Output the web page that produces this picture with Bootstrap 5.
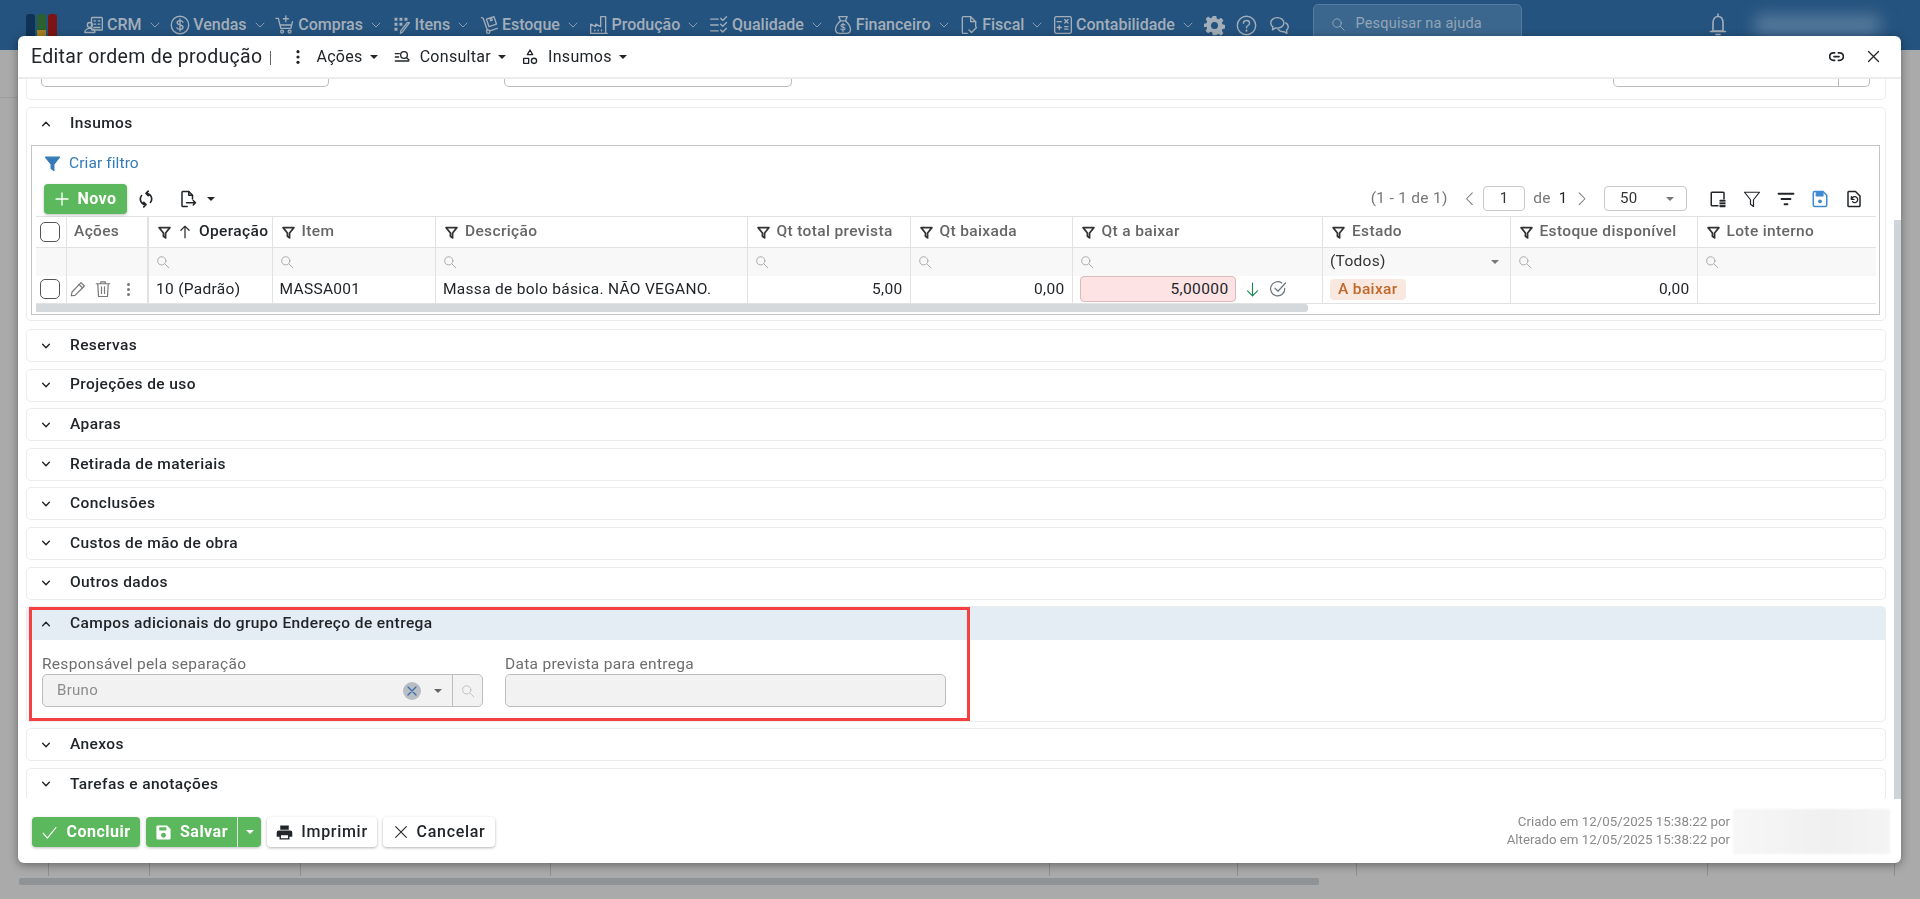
<!DOCTYPE html>
<html lang="pt-BR">
<head>
<meta charset="utf-8">
<title>Editar ordem de produção</title>
<link href="https://cdn.jsdelivr.net/npm/bootstrap@5.3.0/dist/css/bootstrap.min.css" rel="stylesheet">
<style>
html,body{height:100%;overflow:hidden}
body{background:#aaa;font-family:Roboto,"Liberation Sans",sans-serif;font-size:15px;color:#212529;letter-spacing:.3px}
svg.ic{width:1em;height:1em;fill:none;stroke:currentColor;stroke-width:1.6;stroke-linecap:round;stroke-linejoin:round;flex:none;display:block}
.topbar{height:50px;background:#24537f;color:#a3aeb9;font-weight:500;font-size:16px;letter-spacing:0;padding-left:26px}
.logo-mark{width:31px;height:36px;margin-top:14px;align-self:flex-start;display:grid;grid-template-columns:repeat(3,9px);gap:2px;}
.logo-mark i{display:block;border-radius:3px 3px 0 0;height:36px}
.logo-a{background:#0f3357}.logo-b{background:#2c6030;position:relative}.logo-c{background:#7d1414}
.logo-b::after{content:"";position:absolute;left:0;right:0;top:16px;height:20px;background:#a67f1e}
.menu-row{margin-left:27px;gap:9.7px;height:32px}
.menu-item{gap:3px}
.menu-item svg.ic{font-size:20px}
.menu-item svg.chev{font-size:12px;margin-left:4px}
.tool-ic{font-size:21px}
.tool-wide{margin-left:2px}
.help-box{width:209px;height:46px;margin-left:23px;margin-top:4px;align-self:flex-start;background:#3b678f;border:1px solid #557b9f;border-radius:5px;color:#94a5b5;font-weight:400;font-size:14.5px;padding:0 17px 6px;letter-spacing:.2px;gap:10px}
.bell-ic{font-size:24px;margin-left:184px}
.user-blur{width:125px;height:20px;margin-left:25px;background:#587b9c;filter:blur(8px)}
.under-area{height:813px;padding-top:47px}
.under-line{height:1px;width:1000px;background:#9e9e9e}
.under-cols{height:13px;width:1895px}
.under-cols i{display:block;height:13px;border-right:1px solid #8f8f8f}
.under-bar{height:7px;width:1300px;margin:2px 0 0 19px;background:#8f9396;border-radius:2px}

.edit-window{position:fixed;left:18px;top:36px;width:1883px;height:827px;background:#fff;border-radius:6px;box-shadow:0 2px 10px rgba(0,0,0,.4);display:flex;flex-direction:column;overflow:hidden}
.win-head{height:43px;flex:none;border-bottom:2px solid #ececec;padding:0 20px 0 13px;font-size:16px}
.win-title{font-size:19.5px;letter-spacing:.3px;font-weight:400;color:#212529;margin:0;line-height:1}
.head-sep{width:1px;height:14px;background:#666;margin:2px 0 0 8px}
.head-menu{gap:16px;margin-left:19px}
.head-menu svg.ic{font-size:16px}
.head-link{gap:10px}
.head-link .tri{margin-left:-3px}
.tri{display:inline-block;width:0;height:0;border-left:4px solid transparent;border-right:4px solid transparent;border-top:4.5px solid currentColor}
.head-end{gap:22px;font-size:15px}
.head-end svg.ic{stroke-width:2}
.win-body{flex:1;min-height:0;padding:0 14px 0 8px;position:relative;overflow:hidden}
.scroll-thumb{position:absolute;right:0;top:141px;width:7px;height:593px;background:#ced4da;z-index:2}
.sec-card{border:1px solid #ececec;border-radius:5px;margin-bottom:6.6px;background:#fff;width:1860px}
.sec-head{height:31px;padding-left:14px;font-weight:500;font-size:15.5px;letter-spacing:.4px;gap:19px}
.sec-head svg.ic{font-size:10px;stroke-width:3.5;flex:none}
.stub-card{height:21px;border-top:0;border-radius:0 0 5px 5px;position:relative;margin-bottom:7px}
.stub-box{position:absolute;top:0;height:8px;border:1px solid #bbb;border-top:0;border-radius:0 0 5px 5px}
.stub-box.s1{left:14px;width:288px}.stub-box.s2{left:477px;width:288px}.stub-box.s3{left:1586px;width:257px}
.stub-box.s3::after{content:"";position:absolute;right:30px;top:0;bottom:0;border-right:1px solid #bbb}
.ins-card{height:214px;margin-bottom:8px}
.grid-box{margin:6px 0 0 4px;height:170px;width:1849px;border:1px solid #c4c4c4;padding:0 4px;overflow:hidden}
.filter-link{height:35px;padding-left:8px;gap:8px;color:#337ab7;font-size:15.5px;letter-spacing:.1px}
.filter-link svg{font-size:17px;fill:#337ab7;stroke:#337ab7}
.grid-bar{height:35px;padding:0 12px 0 8px}
.btn-go{background:#5cb85c;border:0;color:#fff;font-weight:700;font-size:16px;border-radius:4px;box-shadow:0 1px 3px rgba(0,0,0,.25);letter-spacing:.5px;padding:0;display:flex;align-items:center;height:30px}
.btn-go:hover{background:#5cb85c;color:#fff}
.btn-plain{background:#fff;border:0;color:#212529;font-weight:500;font-size:16px;border-radius:4px;box-shadow:0 1px 3px rgba(0,0,0,.3);letter-spacing:.7px;padding:0;display:flex;align-items:center;height:30px}
.new-btn{width:83px;gap:7px;justify-content:center}
.new-btn svg{font-size:16px;stroke-width:2}
.bar-tool{font-size:18px;color:#212529}
.sync-gap{margin-left:10px}
.tri-gap{margin-left:10px}
.tool-gap{margin-left:16px}
.cols-gap{margin-left:22px}
.pg-gap-a{margin-left:14px}
.pg-gap-b{margin-left:6px}
.pg-gap-c{margin-left:15px}
.tool-blue{color:#3f8ad0}
.page-info{color:#777;font-size:15.5px}
.page-num{width:42px;height:25px;border:1px solid #c8c8c8;border-radius:4px;text-align:center;line-height:23px;color:#333}
.page-size{width:83px;height:25px;border:1px solid #c8c8c8;border-radius:4px;padding:0 12px 0 15px;color:#333;font-size:15px}
.page-size .tri{color:#777}
.grid-table{table-layout:fixed;width:1840px;margin:0;font-size:15.5px;border-collapse:collapse}
.grid-table th,.grid-table td{padding:0 7px;border:0;border-right:1px solid #e2e2e2;border-bottom:1px solid #e2e2e2;white-space:nowrap;overflow:hidden;vertical-align:middle;box-shadow:none}
.grid-table th{height:31px;font-weight:500;color:#666;border-top:1px solid #e2e2e2;letter-spacing:.35px}
.grid-table th.sorted{color:#212529}
.grid-table td{color:#212529;letter-spacing:.3px}
.grid-table tr.filter-row td{height:28px;background:#f8f8f8;color:#333;border-bottom:0}
.grid-table tr.data-row td{height:28px}
.grid-table td.thick,.grid-table th.thick{border-right-width:2px}
.grid-table th .cell-in{display:flex;align-items:center;gap:7px;padding-left:2px}
.grid-table th svg.ic{font-size:13px;stroke:#333;stroke-width:3.2}
.grid-table th svg.thin-arrow{font-size:14px;stroke-width:2.2}
.filter-row svg.ic{font-size:14px;color:#a8a8a8}
.filter-row .tri{color:#777}
.check-box{display:block;width:20px;height:20px;border:1.5px solid #555;border-radius:5px;background:#fff}
.act-set{gap:7px;color:#777;font-size:18px;margin-left:-5px}
.act-set svg:last-child{font-size:15px;margin-left:2px}
.amount-in{height:26px;background:#fde3e3;border:1px solid #d9b9b9;border-radius:4px;width:156px;text-align:right;padding:0 6px;line-height:24px;letter-spacing:.4px}
.amt-cell{gap:8px}
.amt-cell svg.ic{font-size:17px}
.amt-cell svg.big-ok{font-size:18px}
.status-pill{background:#f8e8df;color:#c0682a;font-weight:500;font-size:15.5px;border-radius:4px;padding:0 8px;height:21px;line-height:21px;display:inline-block;letter-spacing:.35px}
.scroll-row{height:8px;background:#fff}
.scroll-row i{display:block;width:1272px;height:8px;background:#d5d9dc;border-radius:0 3px 3px 0}
.extra-card{height:116px;margin-bottom:6px}
.extra-head{background:#e3edf3;height:33px}
.extra-body{padding:15px 15px 0;gap:22px;position:relative}
.ext-field{width:441px}
.ext-label{color:#6d6d6d;font-size:15.5px;line-height:18px;height:19px;letter-spacing:.3px}
.ext-input{height:33px;background:#f2f2f2;border:1px solid #bdbdbd;border-radius:5px;color:#8c8c8c;padding-left:14px;font-size:15px}
.clear-dot{width:18px;height:18px;border-radius:50%;background:#b9bec4;color:#3b6ea8;font-size:12px;margin-left:auto}
.clear-dot svg.ic{stroke-width:2.6}
.ext-caret{margin:0 10px 0 13px;color:#666}
.ext-search{width:30px;height:100%;border-left:1px solid #bdbdbd;font-size:14px;color:#c0c0c0}
.mark-box{position:absolute;left:2px;top:-33px;width:941px;height:114px;border:3px solid #f44040;pointer-events:none}
.win-foot{height:64px;flex:none;padding:0 11px 0 14px}
.foot-btns{gap:6px;height:30px;align-self:flex-start;margin-top:18px}
.foot-ic{font-size:17px}
.foot-note{color:#8a8a8a;font-size:13.3px;line-height:18px;text-align:right;letter-spacing:0;margin-right:3px}
.user-smudge{width:157px;height:45px;background:linear-gradient(90deg,#f7f7f7,#f0f0f0 60%,#f4f4f4);filter:blur(1px)}
.save-group{display:flex;border-radius:4px;box-shadow:0 1px 3px rgba(0,0,0,.25)}
.save-group .btn-go{box-shadow:none}
</style>
</head>
<body>
<svg width="0" height="0" class="position-absolute">
<defs>
<symbol id="i-chev" viewBox="0 0 24 24"><path d="M4 8l8 8 8-8"/></symbol>
<symbol id="i-up" viewBox="0 0 24 24"><path d="M4 16l8-8 8 8"/></symbol>
<symbol id="i-arrowup" viewBox="0 0 24 24"><path d="M12 22V2M5 9l7-7 7 7"/></symbol>
<symbol id="i-crm" viewBox="0 0 24 24"><rect x="9" y="3" width="13" height="15" rx="1"/><path d="M12 7h2M17 7h2M12 11h2M17 11h2M12 15h7"/><circle cx="7" cy="12" r="3"/><path d="M1 21c0-3 3-5 6-5s5 1 6 3v2z"/></symbol>
<symbol id="i-usd" viewBox="0 0 24 24"><circle cx="12" cy="12" r="10.5"/><path d="M15.5 8.5c-.8-1.2-2-1.7-3.5-1.7-2 0-3.4 1-3.4 2.6 0 3.6 7 1.6 7 5.2 0 1.700-1.600 2.700-3.600 2.700-1.600 0-2.900-.6-3.700-1.800M12 4.800v14.400"/></symbol>
<symbol id="i-cart" viewBox="0 0 24 24"><path d="M1 4h3l3 12h12l2-8M7 12h13"/><path d="M13 1v7M10 4.500h6"/><circle cx="8.500" cy="20" r="1.700"/><circle cx="17.500" cy="20" r="1.700"/></symbol>
<symbol id="i-items" viewBox="0 0 24 24"><g stroke-linecap="butt" stroke-dasharray="3.500 2.500" stroke-width="3.500"><path d="M3 5h18M3 11h12M3 17h6"/></g><path d="M21 9l-9 12-2 1 .5-3 8-10z" stroke-width="1.500"/></symbol>
<symbol id="i-truck" viewBox="0 0 24 24"><path d="M3 3l2 1 5 14"/><circle cx="11" cy="20" r="2"/><path d="M13 19l9-3"/><path d="M9 5l9-3 3 9-9 3z"/><path d="M13 4l1 3 2-1-1-2"/></symbol>
<symbol id="i-factory" viewBox="0 0 24 24"><path d="M2 22V11l6 3v-3l6 3V2h6v20zM2 22h20"/><path d="M7 18v1M11 18v1M15 18v1"/></symbol>
<symbol id="i-checks" viewBox="0 0 24 24"><path d="M2 5h9M2 12h9M2 19h9M14 4l2.500 2.500L21 2M14 11l2.500 2.500L21 9M14 18l2.500 2.500L21 16"/></symbol>
<symbol id="i-bag" viewBox="0 0 24 24"><path d="M9 7L7 2h10l-2 5"/><path d="M9 7h6M9 7c-3 3-6 6-6 10 0 3 2 5 5 5h8c3 0 5-2 5-5 0-4-3-7-6-10"/><path d="M14.500 12c-.500-.800-1.500-1-2.500-1-1.400 0-2.500.6-2.500 1.800 0 2.400 5 1.200 5 3.400 0 1.100-1 1.800-2.500 1.800-1.200 0-2.100-.4-2.600-1.200M12 9.500v10.500" stroke-width="1.300"/></symbol>
<symbol id="i-doc" viewBox="0 0 24 24"><path d="M10 22H5a1 1 0 0 1-1-1V3a1 1 0 0 1 1-1h9l6 6v6"/><path d="M14 2v6h6"/><path d="M12 18l3 3 6-6"/></symbol>
<symbol id="i-calc" viewBox="0 0 24 24"><rect x="2" y="2" width="20" height="20" rx="2"/><path d="M5 8h5M14 5.500l4 4M18 5.500l-4 4M5 15h5M7.500 12.500v5M14 14h4M14 17h4"/></symbol>
<symbol id="i-gear" viewBox="0 0 24 24"><path fill="currentColor" stroke="none" fill-rule="evenodd" d="M10 1h4l.7 3.200 1.900.8 2.800-1.800 2.800 2.800-1.800 2.800.8 1.900 3.200.7v4l-3.200.7-.8 1.900 1.800 2.800-2.800 2.800-2.800-1.800-1.900.8L14 23h-4l-.7-3.200-1.900-.8-2.800 1.800-2.800-2.800 1.800-2.800-.8-1.900L-.4 14v-4l3.200-.7.800-1.900L1.800 4.600l2.800-2.800 2.800 1.800 1.900-.8zM12 8a4 4 0 1 0 0 8 4 4 0 0 0 0-8z"/></symbol>
<symbol id="i-help" viewBox="0 0 24 24"><circle cx="12" cy="12" r="10.500"/><path d="M8.500 9.500c0-2 1.500-3.300 3.500-3.300s3.500 1.300 3.500 3.100c0 2.700-3.500 2.700-3.500 5.200"/><path d="M12 17.600v.4" stroke-width="2.200"/></symbol>
<symbol id="i-chat" viewBox="0 0 24 24"><path d="M9.500 3c-4 0-7.500 2.400-7.500 6 0 2 1 3.500 2.500 4.500L4 17l3.500-2.200c.7.100 1.300.2 2 .2 4 0 7.500-2.400 7.500-6s-3.500-6-7.500-6z"/><path d="M19 9c2 1 3 2.700 3 4.500 0 1.700-.8 3-2 4l.5 3.500-3.500-2c-2.500.3-5-.5-6.500-2.500"/></symbol>
<symbol id="i-search" viewBox="0 0 24 24"><circle cx="10" cy="10" r="7"/><path d="M15.500 15.500L22 22"/></symbol>
<symbol id="i-bell" viewBox="0 0 24 24"><path d="M12 1v2M7 10c0-4 2-6.500 5-6.500s5 2.500 5 6.500v8H7zM4.500 18.500h15M10 21.500h4"/></symbol>
<symbol id="i-dots" viewBox="0 0 24 24"><circle cx="12" cy="4" r="2.400" fill="currentColor" stroke="none"/><circle cx="12" cy="12" r="2.400" fill="currentColor" stroke="none"/><circle cx="12" cy="20" r="2.400" fill="currentColor" stroke="none"/></symbol>
<symbol id="i-qlist" viewBox="0 0 24 24"><path d="M2 7h6M2 12h5M2 18h20" stroke-width="2"/><circle cx="15" cy="9" r="5" stroke-width="2"/><path d="M19 13l3.500 3.500" stroke-width="2"/></symbol>
<symbol id="i-shapes" viewBox="0 0 24 24"><path d="M12 1.500l4 7H8z" stroke-width="2"/><rect x="2.500" y="14" width="7.500" height="7.500" stroke-width="2"/><circle cx="18" cy="17.800" r="3.900" stroke-width="2"/></symbol>
<symbol id="i-link" viewBox="0 0 24 24"><path d="M9 6H7a6 6 0 0 0 0 12h2M15 6h2a6 6 0 0 1 0 12h-2M8 12h8" stroke-width="2.800"/></symbol>
<symbol id="i-x" viewBox="0 0 24 24"><path d="M4 4l16 16M20 4L4 20"/></symbol>
<symbol id="i-funnel" viewBox="0 0 24 24"><path d="M2 3h20l-8 10v9l-4-3v-6z"/></symbol>
<symbol id="i-plus" viewBox="0 0 24 24"><path d="M12 3v18M3 12h18"/></symbol>
<symbol id="i-sync" viewBox="0 0 24 24"><path d="M12 4.500a7.500 7.500 0 0 1 6 12M15 1.500l-3 3 3 3M12 19.500a7.500 7.500 0 0 1-6-12M9 22.500l3-3-3-3" stroke-width="2.200"/></symbol>
<symbol id="i-export" viewBox="0 0 24 24"><path d="M11 22H5a1 1 0 0 1-1-1V3a1 1 0 0 1 1-1h8l5 5v5" stroke-width="2"/><path d="M13 2v5h5M10 17h12M19 14l3 3-3 3" stroke-width="2"/></symbol>
<symbol id="i-left" viewBox="0 0 24 24"><path d="M16 3l-9 9 9 9"/></symbol>
<symbol id="i-right" viewBox="0 0 24 24"><path d="M8 3l9 9-9 9"/></symbol>
<symbol id="i-cols" viewBox="0 0 24 24"><path d="M12 21H4a1 1 0 0 1-1-1V4a1 1 0 0 1 1-1h15a1 1 0 0 1 1 1v8" stroke-width="2"/><rect x="14" y="13" width="8" height="10" rx="1" fill="currentColor" stroke="none"/><path d="M14 16h8M14 19.500h8" stroke="#fff" stroke-width="1"/></symbol>
<symbol id="i-sort" viewBox="0 0 24 24"><path d="M2 5h20M6 12h12M10 19h4" stroke-width="2.400"/></symbol>
<symbol id="i-save" viewBox="0 0 24 24"><path d="M5 2h11l5 5v13a2 2 0 0 1-2 2H5a2 2 0 0 1-2-2V4a2 2 0 0 1 2-2z" stroke-width="2"/><path d="M7 2.500h9V8H7z" fill="currentColor"/><circle cx="12" cy="15" r="2.500" fill="currentColor" stroke="none"/></symbol>
<symbol id="i-restore" viewBox="0 0 24 24"><path d="M5 2h9l6 6v13a1 1 0 0 1-1 1H5a1 1 0 0 1-1-1V3a1 1 0 0 1 1-1z" stroke-width="2"/><path d="M9 12a4 4 0 1 1 1 3.500M8.500 9v3.500H12" stroke-width="1.800"/></symbol>
<symbol id="i-pencil" viewBox="0 0 24 24"><path d="M4 16L16 3.500l4.500 4.500L8 20.500 3 21z"/><path d="M13.500 6l4.500 4.500"/></symbol>
<symbol id="i-trash" viewBox="0 0 24 24"><path d="M3 5h18M9 5V2.500h6V5M5 5l1 17h12l1-17M10 9v9M14 9v9"/></symbol>
<symbol id="i-down" viewBox="0 0 24 24"><path d="M12 3v18M5 14l7 7 7-7"/></symbol>
<symbol id="i-okc" viewBox="0 0 24 24"><path d="M21 11a9.500 9.500 0 1 1-4-7"/><path d="M8 11l4 4L22 4"/></symbol>
<symbol id="i-check" viewBox="0 0 24 24"><path d="M3 13l6 7L21 5"/></symbol>
<symbol id="i-floppy" viewBox="0 0 24 24"><path fill="currentColor" stroke="none" fill-rule="evenodd" d="M4 2h13l5 5v13a2 2 0 0 1-2 2H4a2 2 0 0 1-2-2V4a2 2 0 0 1 2-2zm2 2.500V9h10V4.500zM12 12.500a3.500 3.500 0 1 0 0 7 3.500 3.500 0 0 0 0-7z"/></symbol>
<symbol id="i-print" viewBox="0 0 24 24"><path fill="currentColor" stroke="none" fill-rule="evenodd" d="M6 2h12v6H6zM4 9h16a3 3 0 0 1 3 3v6h-4v4H5v-4H1v-6a3 3 0 0 1 3-3zm3 7v4h10v-4z"/></symbol>
</defs>
</svg>

<header class="topbar d-flex align-items-center">
  <div class="logo-mark" aria-hidden="true"><i class="logo-a"></i><i class="logo-b"></i><i class="logo-c"></i></div>
  <nav class="menu-row d-flex align-items-center">
    <a class="menu-item d-flex align-items-center text-reset text-decoration-none"><svg class="ic"><use href="#i-crm"/></svg>CRM<svg class="ic chev"><use href="#i-chev"/></svg></a>
    <a class="menu-item d-flex align-items-center text-reset text-decoration-none"><svg class="ic"><use href="#i-usd"/></svg>Vendas<svg class="ic chev"><use href="#i-chev"/></svg></a>
    <a class="menu-item d-flex align-items-center text-reset text-decoration-none"><svg class="ic"><use href="#i-cart"/></svg>Compras<svg class="ic chev"><use href="#i-chev"/></svg></a>
    <a class="menu-item d-flex align-items-center text-reset text-decoration-none"><svg class="ic"><use href="#i-items"/></svg>Itens<svg class="ic chev"><use href="#i-chev"/></svg></a>
    <a class="menu-item d-flex align-items-center text-reset text-decoration-none"><svg class="ic"><use href="#i-truck"/></svg>Estoque<svg class="ic chev"><use href="#i-chev"/></svg></a>
    <a class="menu-item d-flex align-items-center text-reset text-decoration-none"><svg class="ic"><use href="#i-factory"/></svg>Produção<svg class="ic chev"><use href="#i-chev"/></svg></a>
    <a class="menu-item d-flex align-items-center text-reset text-decoration-none"><svg class="ic"><use href="#i-checks"/></svg>Qualidade<svg class="ic chev"><use href="#i-chev"/></svg></a>
    <a class="menu-item d-flex align-items-center text-reset text-decoration-none"><svg class="ic"><use href="#i-bag"/></svg>Financeiro<svg class="ic chev"><use href="#i-chev"/></svg></a>
    <a class="menu-item d-flex align-items-center text-reset text-decoration-none"><svg class="ic"><use href="#i-doc"/></svg>Fiscal<svg class="ic chev"><use href="#i-chev"/></svg></a>
    <a class="menu-item d-flex align-items-center text-reset text-decoration-none"><svg class="ic"><use href="#i-calc"/></svg>Contabilidade<svg class="ic chev"><use href="#i-chev"/></svg></a>
    <svg class="ic tool-ic"><use href="#i-gear"/></svg>
    <svg class="ic tool-ic tool-wide"><use href="#i-help"/></svg>
    <svg class="ic tool-ic tool-wide"><use href="#i-chat"/></svg>
  </nav>
  <div class="help-box d-flex align-items-center"><svg class="ic"><use href="#i-search"/></svg>Pesquisar na ajuda</div>
  <svg class="ic bell-ic"><use href="#i-bell"/></svg>
  <div class="user-blur"></div>
</header>

<div class="under-area"><div class="under-line"></div></div>
<div class="under-cols d-flex">
  <i style="width:49px"></i><i style="width:101px"></i><i style="width:151px"></i><i style="width:250px"></i><i style="width:499px"></i><i style="width:188px"></i><i style="width:119px"></i><i style="width:351px"></i><i style="width:187px"></i>
</div>
<div class="under-bar"></div>

<section class="edit-window" role="dialog" aria-label="Editar ordem de produção">
  <div class="win-head d-flex align-items-center">
    <h1 class="win-title">Editar ordem de produção</h1>
    <span class="head-sep"></span>
    <div class="head-menu d-flex align-items-center">
      <a class="head-link d-flex align-items-center text-reset text-decoration-none"><svg class="ic"><use href="#i-dots"/></svg>Ações<span class="tri"></span></a>
      <a class="head-link d-flex align-items-center text-reset text-decoration-none"><svg class="ic"><use href="#i-qlist"/></svg>Consultar<span class="tri"></span></a>
      <a class="head-link d-flex align-items-center text-reset text-decoration-none"><svg class="ic"><use href="#i-shapes"/></svg>Insumos<span class="tri"></span></a>
    </div>
    <div class="head-end d-flex align-items-center ms-auto">
      <svg class="ic"><use href="#i-link"/></svg>
      <svg class="ic"><use href="#i-x"/></svg>
    </div>
  </div>

  <div class="win-body">
    <div class="scroll-thumb"></div>
    <div class="sec-card stub-card"><span class="stub-box s1"></span><span class="stub-box s2"></span><span class="stub-box s3"></span></div>

    <div class="sec-card ins-card">
      <div class="sec-head d-flex align-items-center"><svg class="ic"><use href="#i-up"/></svg>Insumos</div>
      <div class="grid-box">
        <a class="filter-link d-flex align-items-center text-decoration-none"><svg class="ic"><use href="#i-funnel"/></svg>Criar filtro</a>
        <div class="grid-bar d-flex align-items-center">
          <button type="button" class="btn btn-go new-btn"><svg class="ic"><use href="#i-plus"/></svg>Novo</button>
          <svg class="ic bar-tool sync-gap"><use href="#i-sync"/></svg>
          <svg class="ic bar-tool ms-4"><use href="#i-export"/></svg>
          <span class="tri tri-gap"></span>
          <div class="d-flex align-items-center ms-auto">
            <span class="page-info">(1 - 1 de 1)</span>
            <svg class="ic page-info pg-gap-a"><use href="#i-left"/></svg>
            <span class="page-num pg-gap-b">1</span>
            <span class="page-info ms-2">de</span>
            <span class="ms-2">1</span>
            <svg class="ic page-info pg-gap-b"><use href="#i-right"/></svg>
            <span class="page-size d-flex align-items-center justify-content-between pg-gap-c">50<span class="tri"></span></span>
            <svg class="ic bar-tool cols-gap"><use href="#i-cols"/></svg>
            <svg class="ic bar-tool tool-gap"><use href="#i-funnel"/></svg>
            <svg class="ic bar-tool tool-gap"><use href="#i-sort"/></svg>
            <svg class="ic bar-tool tool-gap tool-blue"><use href="#i-save"/></svg>
            <svg class="ic bar-tool tool-gap"><use href="#i-restore"/></svg>
          </div>
        </div>
        <table class="table grid-table">
          <colgroup><col style="width:30.5px"><col style="width:81.5px"><col style="width:124px"><col style="width:163.5px"><col style="width:311.5px"><col style="width:163px"><col style="width:162px"><col style="width:250.5px"><col style="width:187.5px"><col style="width:187px"><col style="width:179px"></colgroup>
          <thead>
            <tr>
              <th class="px-1"><span class="check-box"></span></th>
              <th class="thick">Ações</th>
              <th class="sorted"><span class="cell-in"><svg class="ic"><use href="#i-funnel"/></svg><svg class="ic thin-arrow"><use href="#i-arrowup"/></svg>Operação</span></th>
              <th><span class="cell-in"><svg class="ic"><use href="#i-funnel"/></svg>Item</span></th>
              <th><span class="cell-in"><svg class="ic"><use href="#i-funnel"/></svg>Descrição</span></th>
              <th><span class="cell-in"><svg class="ic"><use href="#i-funnel"/></svg>Qt total prevista</span></th>
              <th><span class="cell-in"><svg class="ic"><use href="#i-funnel"/></svg>Qt baixada</span></th>
              <th><span class="cell-in"><svg class="ic"><use href="#i-funnel"/></svg>Qt a baixar</span></th>
              <th><span class="cell-in"><svg class="ic"><use href="#i-funnel"/></svg>Estado</span></th>
              <th><span class="cell-in"><svg class="ic"><use href="#i-funnel"/></svg>Estoque disponível</span></th>
              <th class="border-end-0"><span class="cell-in"><svg class="ic"><use href="#i-funnel"/></svg>Lote interno</span></th>
            </tr>
          </thead>
          <tbody>
            <tr class="filter-row">
              <td></td><td class="thick"></td>
              <td><svg class="ic"><use href="#i-search"/></svg></td>
              <td><svg class="ic"><use href="#i-search"/></svg></td>
              <td><svg class="ic"><use href="#i-search"/></svg></td>
              <td><svg class="ic"><use href="#i-search"/></svg></td>
              <td><svg class="ic"><use href="#i-search"/></svg></td>
              <td><svg class="ic"><use href="#i-search"/></svg></td>
              <td><div class="d-flex align-items-center justify-content-between">(Todos)<span class="tri me-1"></span></div></td>
              <td><svg class="ic"><use href="#i-search"/></svg></td>
              <td class="border-end-0"><svg class="ic"><use href="#i-search"/></svg></td>
            </tr>
            <tr class="data-row">
              <td class="px-1"><span class="check-box"></span></td>
              <td class="thick"><div class="act-set d-flex align-items-center"><svg class="ic"><use href="#i-pencil"/></svg><svg class="ic"><use href="#i-trash"/></svg><svg class="ic"><use href="#i-dots"/></svg></div></td>
              <td>10 (Padrão)</td>
              <td>MASSA001</td>
              <td>Massa de bolo básica. NÃO VEGANO.</td>
              <td class="text-end">5,00</td>
              <td class="text-end">0,00</td>
              <td><div class="amt-cell d-flex align-items-center"><span class="amount-in">5,00000</span><svg class="ic text-success"><use href="#i-down"/></svg><svg class="ic big-ok text-secondary"><use href="#i-okc"/></svg></div></td>
              <td><span class="status-pill">A baixar</span></td>
              <td class="text-end">0,00</td>
              <td class="border-end-0"></td>
            </tr>
          </tbody>
        </table>
        <div class="scroll-row"><i></i></div>
      </div>
    </div>

    <div class="sec-card"><div class="sec-head d-flex align-items-center"><svg class="ic"><use href="#i-chev"/></svg>Reservas</div></div>
    <div class="sec-card"><div class="sec-head d-flex align-items-center"><svg class="ic"><use href="#i-chev"/></svg>Projeções de uso</div></div>
    <div class="sec-card"><div class="sec-head d-flex align-items-center"><svg class="ic"><use href="#i-chev"/></svg>Aparas</div></div>
    <div class="sec-card"><div class="sec-head d-flex align-items-center"><svg class="ic"><use href="#i-chev"/></svg>Retirada de materiais</div></div>
    <div class="sec-card"><div class="sec-head d-flex align-items-center"><svg class="ic"><use href="#i-chev"/></svg>Conclusões</div></div>
    <div class="sec-card"><div class="sec-head d-flex align-items-center"><svg class="ic"><use href="#i-chev"/></svg>Custos de mão de obra</div></div>
    <div class="sec-card"><div class="sec-head d-flex align-items-center"><svg class="ic"><use href="#i-chev"/></svg>Outros dados</div></div>

    <div class="sec-card extra-card">
      <div class="sec-head extra-head d-flex align-items-center"><svg class="ic"><use href="#i-up"/></svg>Campos adicionais do grupo Endereço de entrega</div>
      <div class="extra-body d-flex">
        <span class="mark-box"></span>
        <div class="ext-field">
          <div class="ext-label">Responsável pela separação</div>
          <div class="ext-input d-flex align-items-center">Bruno<span class="clear-dot d-flex align-items-center justify-content-center"><svg class="ic"><use href="#i-x"/></svg></span><span class="tri ext-caret"></span><span class="ext-search d-flex align-items-center justify-content-center"><svg class="ic"><use href="#i-search"/></svg></span></div>
        </div>
        <div class="ext-field">
          <div class="ext-label">Data prevista para entrega</div>
          <div class="ext-input"></div>
        </div>
      </div>
    </div>

    <div class="sec-card"><div class="sec-head d-flex align-items-center"><svg class="ic"><use href="#i-chev"/></svg>Anexos</div></div>
    <div class="sec-card"><div class="sec-head d-flex align-items-center"><svg class="ic"><use href="#i-chev"/></svg>Tarefas e anotações</div></div>
  </div>

  <div class="win-foot d-flex align-items-center justify-content-between">
    <div class="foot-btns d-flex">
      <button type="button" class="btn btn-go gap-2 justify-content-center" style="width:108px"><svg class="ic foot-ic"><use href="#i-check"/></svg>Concluir</button>
      <div class="save-group">
        <button type="button" class="btn btn-go gap-2 justify-content-center rounded-end-0 border-end" style="width:92px"><svg class="ic foot-ic"><use href="#i-floppy"/></svg>Salvar</button>
        <button type="button" class="btn btn-go justify-content-center rounded-start-0" style="width:23px"><span class="tri"></span></button>
      </div>
      <button type="button" class="btn btn-plain gap-2 justify-content-center" style="width:110px"><svg class="ic foot-ic"><use href="#i-print"/></svg>Imprimir</button>
      <button type="button" class="btn btn-plain gap-2 justify-content-center" style="width:112px"><svg class="ic"><use href="#i-x"/></svg>Cancelar</button>
    </div>
    <div class="d-flex align-items-center">
      <div class="foot-note">Criado em 12/05/2025 15:38:22 por<br>Alterado em 12/05/2025 15:38:22 por</div>
      <div class="user-smudge"></div>
    </div>
  </div>
</section>

<script src="https://cdn.jsdelivr.net/npm/bootstrap@5.3.0/dist/js/bootstrap.bundle.min.js"></script>
</body>
</html>
